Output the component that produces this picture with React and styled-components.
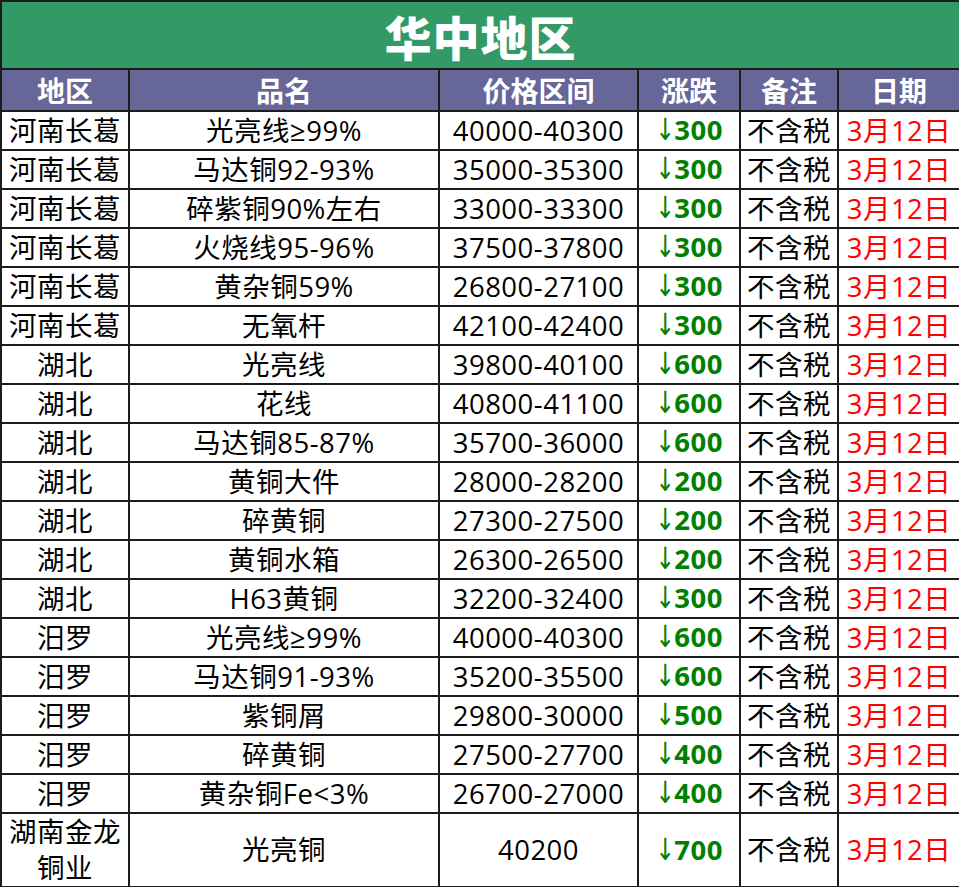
import React from "react";
import styled, { createGlobalStyle } from "styled-components";

const Global = createGlobalStyle`
  html, body { margin: 0; padding: 0; background: #fff; }
  body { font-family: "Open Sans", "Noto Sans CJK SC", sans-serif; }
`;

const Table = styled.table`
  width: 959px;
  border-collapse: collapse;
  table-layout: fixed;
  font-family: "Open Sans", "Noto Sans CJK SC", sans-serif;
`;

const TitleCell = styled.th`
  height: 66px;
  padding: 0;
  background: #339966;
  color: #fff;
  font-size: 47px;
  font-weight: 900;
  font-family: "Noto Sans CJK SC", sans-serif;
  letter-spacing: 1px;
  border: 2px solid #1c1c1c;
  line-height: 1;
`;

const HeadCell = styled.th`
  height: 40px;
  padding: 0;
  background: #666699;
  color: #fff;
  font-size: 28px;
  font-weight: 700;
  font-family: "Noto Sans CJK SC", sans-serif;
  border: 2px solid #1c1c1c;
  line-height: 1;
`;

const Cell = styled.td`
  height: ${(p) => (p.$tall ? "72px" : "37px")};
  padding: 0;
  text-align: center;
  vertical-align: middle;
  font-size: 27.5px;
  letter-spacing: 0.5px;
  line-height: ${(p) => (p.$tall ? "36px" : "1")};
  color: ${(p) => p.$color || "#000"};
  font-weight: ${(p) => (p.$bold ? 700 : 400)};
  border: 2px solid #1c1c1c;
  white-space: ${(p) => (p.$wrap ? "normal" : "nowrap")};
  overflow: hidden;
`;

const Arrow = styled.span`
  display: inline-block;
  font-weight: 400;
  font-family: "DejaVu Sans", sans-serif;
  font-size: 29px;
  letter-spacing: 0;
  margin-left: -2px;
  margin-right: -3px;
  transform: scale(0.8, 1.05);
`;

const rows = [
  ["河南长葛", "光亮线≥99%", "40000-40300", "300"],
  ["河南长葛", "马达铜92-93%", "35000-35300", "300"],
  ["河南长葛", "碎紫铜90%左右", "33000-33300", "300"],
  ["河南长葛", "火烧线95-96%", "37500-37800", "300"],
  ["河南长葛", "黄杂铜59%", "26800-27100", "300"],
  ["河南长葛", "无氧杆", "42100-42400", "300"],
  ["湖北", "光亮线", "39800-40100", "600"],
  ["湖北", "花线", "40800-41100", "600"],
  ["湖北", "马达铜85-87%", "35700-36000", "600"],
  ["湖北", "黄铜大件", "28000-28200", "200"],
  ["湖北", "碎黄铜", "27300-27500", "200"],
  ["湖北", "黄铜水箱", "26300-26500", "200"],
  ["湖北", "H63黄铜", "32200-32400", "300"],
  ["汨罗", "光亮线≥99%", "40000-40300", "600"],
  ["汨罗", "马达铜91-93%", "35200-35500", "600"],
  ["汨罗", "紫铜屑", "29800-30000", "500"],
  ["汨罗", "碎黄铜", "27500-27700", "400"],
  ["汨罗", "黄杂铜Fe<3%", "26700-27000", "400"],
];

const widths = [128, 310, 199, 102, 98, 122];

function Row({ region, name, price, change, tall }) {
  return (
    <tr>
      <Cell $tall={tall} $wrap={tall}>{region}</Cell>
      <Cell $tall={tall}>{name}</Cell>
      <Cell $tall={tall}>{price}</Cell>
      <Cell $tall={tall} $bold $color="#008000">
        <Arrow>↓</Arrow>
        {change}
      </Cell>
      <Cell $tall={tall}>不含税</Cell>
      <Cell $tall={tall} $color="#ff0000">3月12日</Cell>
    </tr>
  );
}

export default function App() {
  return (
    <>
      <Global />
      <Table>
        <colgroup>
          {widths.map((w, i) => (
            <col key={i} style={{ width: w }} />
          ))}
        </colgroup>
        <thead>
          <tr>
            <TitleCell colSpan={6}>华中地区</TitleCell>
          </tr>
          <tr>
            <HeadCell>地区</HeadCell>
            <HeadCell>品名</HeadCell>
            <HeadCell>价格区间</HeadCell>
            <HeadCell>涨跌</HeadCell>
            <HeadCell>备注</HeadCell>
            <HeadCell>日期</HeadCell>
          </tr>
        </thead>
        <tbody>
          {rows.map((r, i) => (
            <Row key={i} region={r[0]} name={r[1]} price={r[2]} change={r[3]} />
          ))}
          <Row tall region={<>湖南金龙<br />铜业</>} name="光亮铜" price="40200" change="700" />
        </tbody>
      </Table>
    </>
  );
}
